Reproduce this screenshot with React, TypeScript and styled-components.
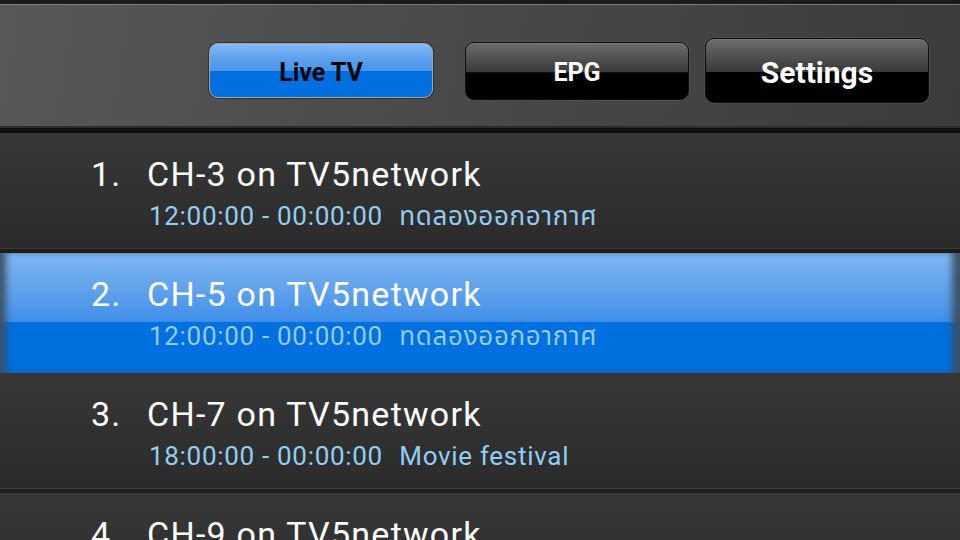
import React from "react";
import styled, { createGlobalStyle, css } from "styled-components";

const GlobalStyle = createGlobalStyle`
  html, body {
    margin: 0;
    padding: 0;
    background: #1c1c1c;
  }
  * {
    box-sizing: border-box;
  }
`;

const Screen = styled.div`
  width: 960px;
  height: 540px;
  overflow: hidden;
  background: #2b2b2b;
  font-family: Roboto, "Noto Sans", "DejaVu Sans", sans-serif;
`;

const Header = styled.div`
  height: 133px;
  display: flex;
  align-items: center;
  justify-content: flex-end;
  padding: 9px 31px 0 0;
  border-top: 4px solid #1b1b1b;
  border-bottom: 5px solid #121212;
  background: linear-gradient(100deg, #585858 0%, #4a4a4a 45%, #3b3b3b 100%);
  box-shadow: inset 0 1px 0 #7d7d7d, inset 0 -2px 0 #2c2c2c;
`;

const Button = styled.button<{ $variant: "blue" | "black"; $h: number; $size: number; $gap: number }>`
  width: 224px;
  height: ${(p) => p.$h}px;
  margin-left: ${(p) => p.$gap}px;
  border-radius: 9px;
  font-family: Roboto, "Noto Sans", sans-serif;
  font-weight: 700;
  font-size: ${(p) => p.$size}px;
  padding: 3px 0 0;
  cursor: pointer;
  ${(p) =>
    p.$variant === "blue"
      ? css`
          color: #000;
          border: 1px solid #a8a8a8;
          box-shadow: 0 0 0 1px #2e2e2e;
          background: linear-gradient(
            #82baf3 0%,
            #5a9eec 30%,
            #4a95ea 50%,
            #006fe0 51%,
            #006fe0 100%
          );
        `
      : css`
          color: #fff;
          border: 1px solid #0c0c0c;
          box-shadow: 0 0 0 1px #4e4e4e, inset 0 1px 0 #7a7a7a;
          background: linear-gradient(
            #6e6e6e 0%,
            #4e4e4e 30%,
            #3a3a3a 52%,
            #000 53%,
            #000 100%
          );
        `}
`;

const List = styled.div`
  display: flex;
  flex-direction: column;
`;

const Row = styled.div<{ $selected?: boolean }>`
  height: 120px;
  flex-shrink: 0;
  display: grid;
  grid-template-columns: 55px 1fr;
  grid-template-rows: 40px 30px;
  row-gap: 7px;
  padding: 21px 0 0 92px;
  ${(p) =>
    p.$selected
      ? css`
          background: linear-gradient(
            #7fb7f1 0%,
            #61a2ec 30%,
            #3f8fe8 57%,
            #006fe0 58%,
            #006fe0 100%
          );
          box-shadow: inset 9px 0 7px -3px rgba(60, 80, 100, 0.95),
            inset -11px 0 7px -3px rgba(60, 80, 100, 0.95);
        `
      : css`
          background: linear-gradient(#373737 0%, #303030 60%, #2b2b2b 100%);
          border-bottom: 4px solid #1d1d1d;
          box-shadow: inset 0 -1px 0 #3a3a3a;
        `}
`;

const Num = styled.div`
  color: #fff;
  font-size: 34px;
  line-height: 40px;
  letter-spacing: 1.2px;
  margin-left: -1px;
`;

const Title = styled.div`
  color: #fff;
  font-size: 34px;
  line-height: 40px;
  letter-spacing: 1.25px;
  white-space: nowrap;
`;

const Sub = styled.div`
  grid-column: 2;
  padding-left: 2px;
  color: #93cdf3;
  font-size: 26px;
  line-height: 30px;
  letter-spacing: 0.7px;
  white-space: nowrap;
  font-family: Roboto, "Noto Sans Thai", "Noto Sans", "DejaVu Sans", sans-serif;
`;

const Show = styled.span`
  margin-left: 2px;
`;

const channels = [
  { ch: "CH-3", time: "12:00:00 - 00:00:00", show: "ทดลองออกอากาศ" },
  { ch: "CH-5", time: "12:00:00 - 00:00:00", show: "ทดลองออกอากาศ" },
  { ch: "CH-7", time: "18:00:00 - 00:00:00", show: "Movie festival" },
  { ch: "CH-9", time: "18:00:00 - 00:00:00", show: "" },
];

export default function App() {
  return (
    <Screen>
      <GlobalStyle />
      <Header>
        <Button $variant="blue" $h={55} $size={25} $gap={0}>
          Live TV
        </Button>
        <Button $variant="black" $h={58} $size={25} $gap={32}>
          EPG
        </Button>
        <Button $variant="black" $h={65} $size={30} $gap={16}>
          Settings
        </Button>
      </Header>
      <List>
        {channels.map((c, i) => (
          <Row key={i} $selected={i === 1}>
            <Num>{i + 1}.</Num>
            <Title>{c.ch} on TV5network</Title>
            <Sub>
              {c.time}&nbsp;&nbsp;<Show>{c.show}</Show>
            </Sub>
          </Row>
        ))}
      </List>
    </Screen>
  );
}
